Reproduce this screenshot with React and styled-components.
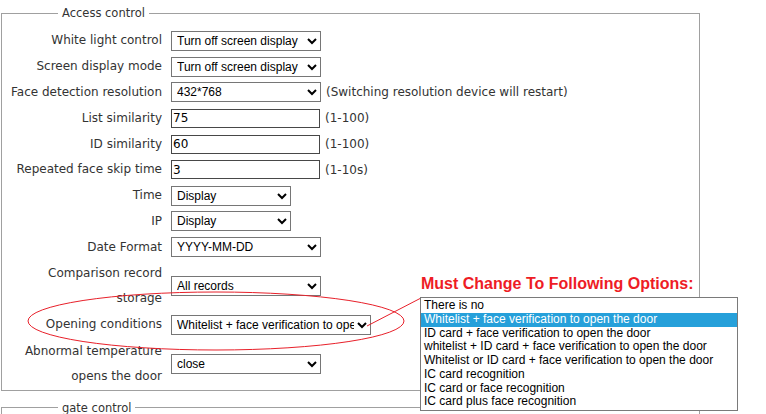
import React from 'react';
import styled, { createGlobalStyle } from 'styled-components';

const GlobalStyle = createGlobalStyle`
  html, body {
    margin: 0;
    padding: 0;
    background: #fff;
    height: 414px;
    overflow: hidden;
  }
  body {
    font-family: "DejaVu Sans", Tahoma, sans-serif;
    font-size: 12px;
    color: #333;
  }
`;

const Page = styled.div`
  position: relative;
  width: 766px;
  height: 414px;
  overflow: hidden;
`;

const Fieldset = styled.fieldset`
  box-sizing: border-box;
  width: 699px;
  min-height: ${(p) => p.$minHeight || 0}px;
  margin: ${(p) => p.$top}px 0 0 1px;
  padding: 5px 0 0;
  border: 1px solid #a0a0a0;
`;

const Legend = styled.legend`
  margin-left: 56px;
  padding: 0 4px;
  line-height: 20px;
  font-size: 11.5px;
  color: #333;
`;

const Row = styled.div`
  display: flex;
  align-items: center;
`;

const Label = styled.div`
  box-sizing: border-box;
  width: 160px;
  padding: ${(p) => (p.$tall ? '1px 0' : '0.4px 0')};
  line-height: 25px;
  text-align: right;
  color: #333;
`;

const Control = styled.div`
  display: flex;
  align-items: center;
  margin-left: 9px;
`;

const Select = styled.select`
  box-sizing: border-box;
  width: ${(p) => p.$w}px;
  height: 20px;
  margin: 0;
  padding: 0 0 0 1px;
  font: 12px "Liberation Sans", Arial, sans-serif;
  color: #000;
  background: #fff;
  border: 1px solid #767676;
  border-radius: 0;
`;

const TextInput = styled.input`
  box-sizing: border-box;
  width: 149px;
  height: 19px;
  margin: 0;
  padding: 0 1px;
  font: 12px "DejaVu Sans", Tahoma, sans-serif;
  color: #000;
  background: #fff;
  border: 1px solid #474747;
  border-radius: 0;
  outline: none;
`;

const Hint = styled.span`
  margin-left: 5px;
  color: #333;
`;

const Marks = styled.svg`
  position: absolute;
  left: 0;
  top: 0;
  pointer-events: none;
`;

const Callout = styled.div`
  position: absolute;
  left: 420px;
  top: 275px;
`;

const CalloutTitle = styled.div`
  padding-left: 1px;
  margin-bottom: 4px;
  font: bold 16px/18px "Liberation Sans", Arial, sans-serif;
  color: #ee1c25;
`;

const OptionList = styled.ul`
  box-sizing: border-box;
  width: 318px;
  margin: 0;
  padding: 1px 0 1px;
  list-style: none;
  background: #fff;
  border: 1px solid #7a7a7a;
`;

const Option = styled.li`
  padding-left: 3px;
  font: 12px/13.75px "Liberation Sans", Arial, sans-serif;
  color: ${(p) => (p.$active ? '#fff' : '#000')};
  background: ${(p) => (p.$active ? '#26a0da' : 'transparent')};
  white-space: nowrap;
`;

const screenOpts = ['Turn off screen display', 'Turn on screen display'];
const showOpts = ['Display', 'Hide'];

const openingOptions = [
  'There is no',
  'Whitelist + face verification to open the door',
  'ID card + face verification to open the door',
  'whitelist + ID card + face verification to open the door',
  'Whitelist or ID card + face verification to open the door',
  'IC card recognition',
  'IC card or face recognition',
  'IC card plus face recognition',
];

const Choice = ({ w, options, value }) => (
  <Select $w={w} defaultValue={value || options[0]}>
    {options.map((o) => (
      <option key={o}>{o}</option>
    ))}
  </Select>
);

const App = () => (
  <Page>
    <GlobalStyle />
    <Fieldset $top={3}>
      <Legend>Access control</Legend>
      <Row>
        <Label>White light control</Label>
        <Control>
          <Choice w={150} options={screenOpts} />
        </Control>
      </Row>
      <Row>
        <Label>Screen display mode</Label>
        <Control>
          <Choice w={150} options={screenOpts} />
        </Control>
      </Row>
      <Row>
        <Label>Face detection resolution</Label>
        <Control>
          <Choice w={150} options={['432*768', '720*1280']} />
          <Hint>(Switching resolution device will restart)</Hint>
        </Control>
      </Row>
      <Row>
        <Label>List similarity</Label>
        <Control>
          <TextInput defaultValue="75" />
          <Hint>(1-100)</Hint>
        </Control>
      </Row>
      <Row>
        <Label>ID similarity</Label>
        <Control>
          <TextInput defaultValue="60" />
          <Hint>(1-100)</Hint>
        </Control>
      </Row>
      <Row>
        <Label>Repeated face skip time</Label>
        <Control>
          <TextInput defaultValue="3" />
          <Hint>(1-10s)</Hint>
        </Control>
      </Row>
      <Row>
        <Label>Time</Label>
        <Control>
          <Choice w={120} options={showOpts} />
        </Control>
      </Row>
      <Row>
        <Label>IP</Label>
        <Control>
          <Choice w={120} options={showOpts} />
        </Control>
      </Row>
      <Row>
        <Label>Date Format</Label>
        <Control>
          <Choice w={150} options={['YYYY-MM-DD', 'DD-MM-YYYY', 'MM-DD-YYYY']} />
        </Control>
      </Row>
      <Row>
        <Label $tall>
          Comparison record
          <br />
          storage
        </Label>
        <Control>
          <Choice w={150} options={['All records', 'Passed records', 'None']} />
        </Control>
      </Row>
      <Row>
        <Label>Opening conditions</Label>
        <Control>
          <Choice w={200} options={openingOptions} value={openingOptions[1]} />
        </Control>
      </Row>
      <Row>
        <Label $tall>
          Abnormal temperature
          <br />
          opens the door
        </Label>
        <Control>
          <Choice w={150} options={['close', 'open']} />
        </Control>
      </Row>
    </Fieldset>
    <Fieldset $top={7} $minHeight={120}>
      <Legend>gate control</Legend>
    </Fieldset>

    <Marks width="766" height="414" viewBox="0 0 766 414">
      <ellipse cx="216" cy="321" rx="188" ry="29" fill="none" stroke="#e8202a" strokeWidth="1" />
      <line x1="367" y1="326" x2="421" y2="298" stroke="#e8202a" strokeWidth="1" />
    </Marks>

    <Callout>
      <CalloutTitle>Must Change To Following Options:</CalloutTitle>
      <OptionList>
        {openingOptions.map((o, i) => (
          <Option key={o} $active={i === 1}>
            {o}
          </Option>
        ))}
      </OptionList>
    </Callout>
  </Page>
);

export default App;
